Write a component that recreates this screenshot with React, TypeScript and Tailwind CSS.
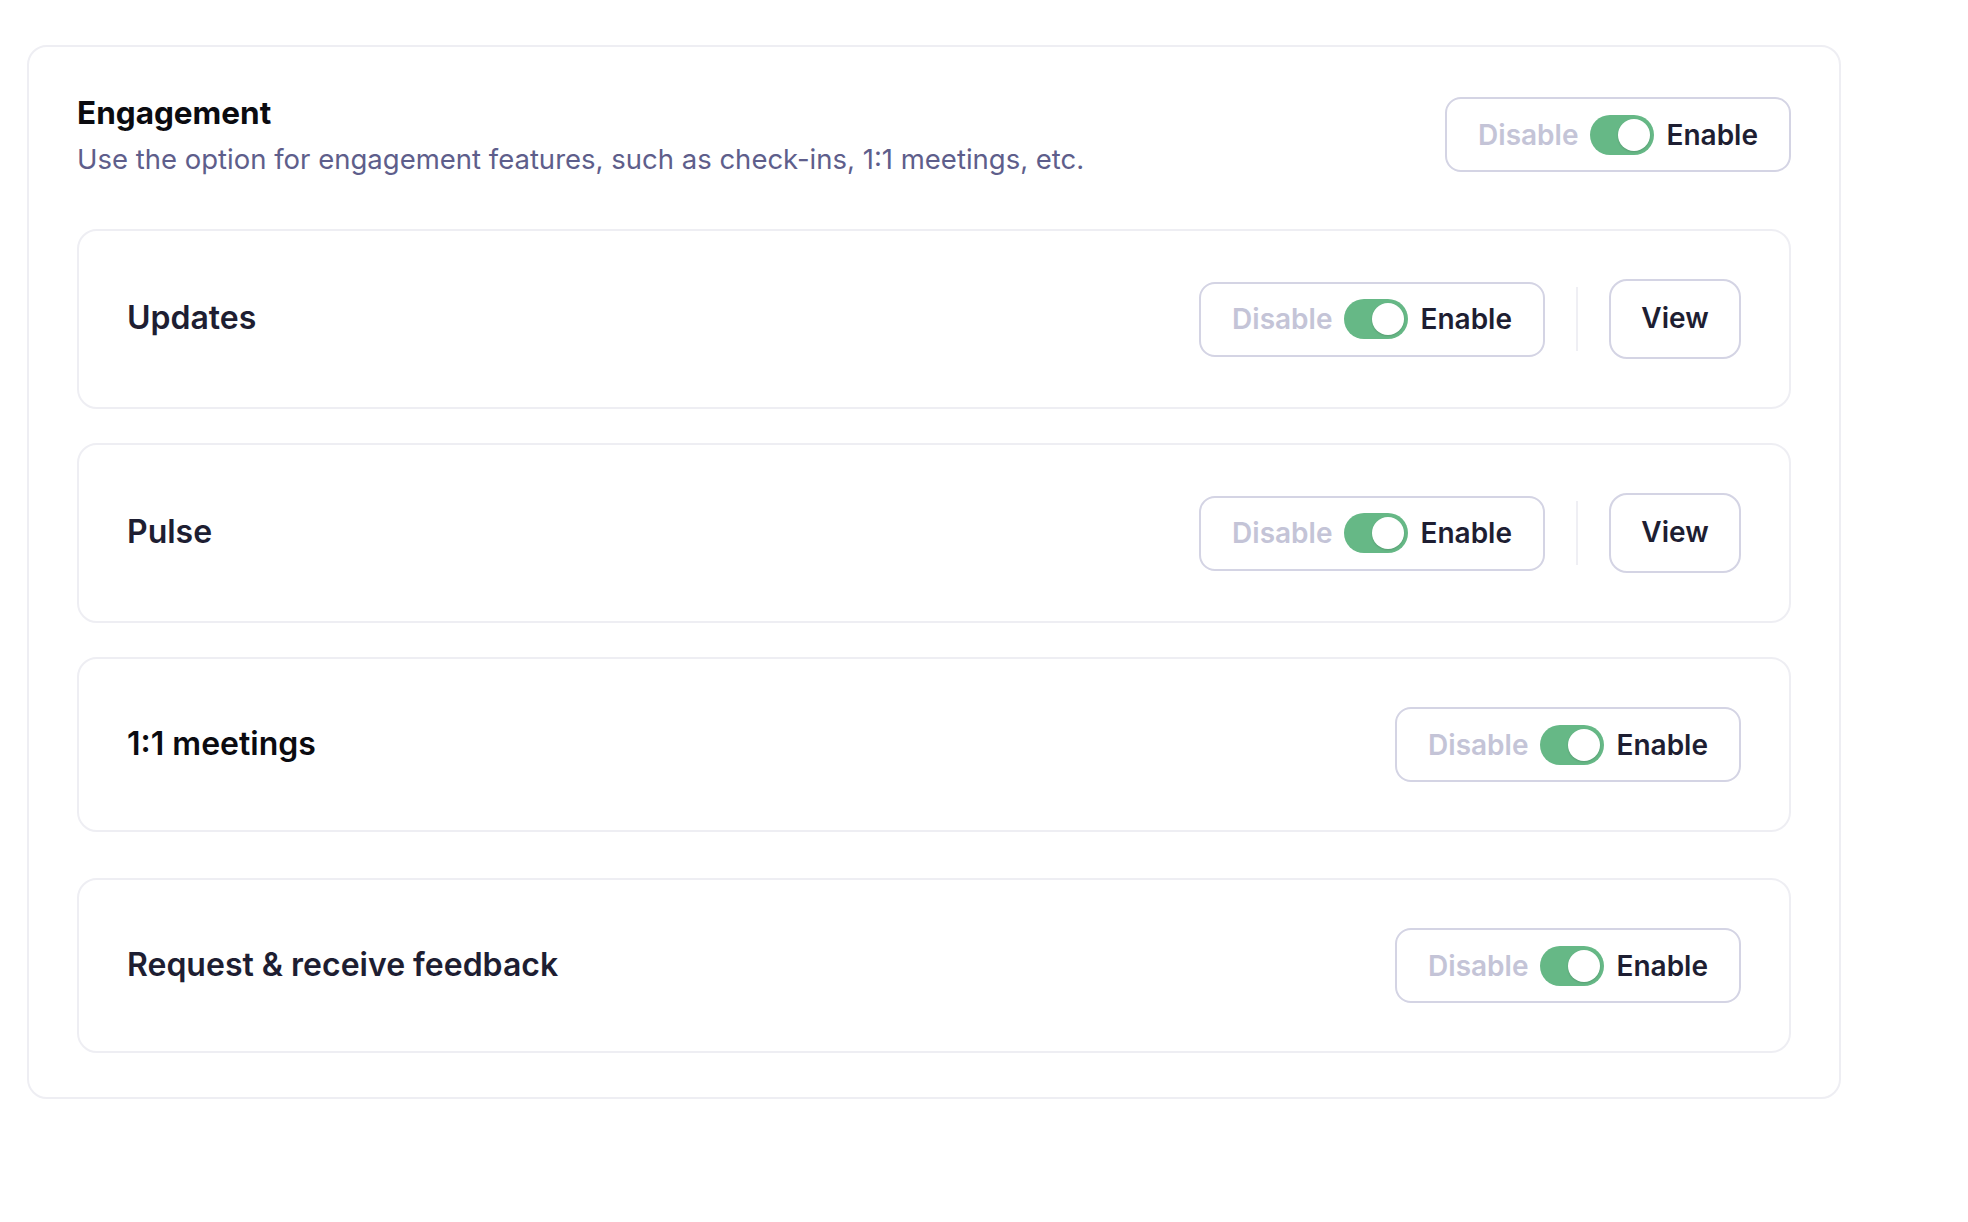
const font = { fontFamily: 'Inter, "Noto Sans", sans-serif' };

function Toggle() {
  return (
    <div className="flex h-[75px] items-center gap-3 rounded-2xl border-2 border-[#d4d4e4] px-[31px]">
      <span className="text-[28px] font-semibold text-[#c4c4d7]">Disable</span>
      <span className="flex h-10 w-16 items-center justify-end rounded-full bg-[#66b886] p-1">
        <span className="h-8 w-8 rounded-full bg-white shadow-[0_1px_2px_rgba(0,0,0,0.15)]" />
      </span>
      <span className="text-[28px] font-semibold text-[#1e1e32]">Enable</span>
    </div>
  );
}

const rows = [
  { name: 'Updates', view: true, color: 'text-[#1e1e32]', space: '' },
  { name: 'Pulse', view: true, color: 'text-[#1e1e32]', space: 'mt-[34px]' },
  { name: '1:1 meetings', view: false, color: 'text-[#0b0b10]', space: 'mt-[34px]' },
  { name: 'Request & receive feedback', view: false, color: 'text-[#1e1e32]', space: 'mt-[46px]' },
];

export default function App() {
  return (
    <div className="min-h-screen bg-white pl-[27px] pt-[45px]" style={font}>
      <div className="w-[1814px] rounded-[20px] border-2 border-[#eeeef3] px-[48px] pb-[44px] pt-[50px]">
        <div className="mb-[57px] flex h-[75px] items-start justify-between">
          <div className="-mt-[2px]">
            <h1 className="text-[31.5px] font-bold leading-[36px] text-[#0b0b10]">Engagement</h1>
            <p className="mt-[12px] text-[27.5px] leading-[32px] text-[#5e5e8b]">
              Use the option for engagement features, such as check-ins, 1:1 meetings, etc.
            </p>
          </div>
          <Toggle />
        </div>

        <div className="flex flex-col">
          {rows.map((row) => (
            <div
              key={row.name}
              className={`flex items-center justify-between rounded-[20px] border-2 border-[#eeeef3] px-[48px] py-[48px] ${row.space}`}
            >
              <span className={`pb-[2px] text-[32px] font-semibold ${row.color}`}>{row.name}</span>
              <div className="flex items-center gap-[31px]">
                <Toggle />
                {row.view && (
                  <>
                    <span className="h-16 w-[2px] bg-[#efeff4]" />
                    <button className="flex h-20 w-[132px] items-center justify-center rounded-[18px] border-2 border-[#d4d4e4] pb-[3px] text-[28px] font-semibold text-[#1e1e32]">
                      View
                    </button>
                  </>
                )}
              </div>
            </div>
          ))}
        </div>
      </div>
    </div>
  );
}
